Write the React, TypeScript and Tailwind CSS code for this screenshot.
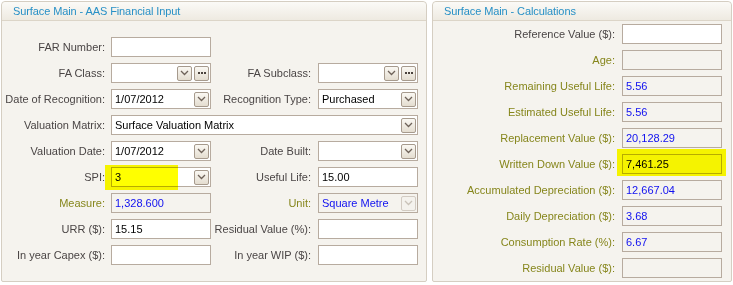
import React from "react";

const FONT = { fontFamily: '"Liberation Sans", Arial, sans-serif' };

function Chevron({ disabled }: { disabled?: boolean }) {
  return (
    <svg width="9" height="6" viewBox="0 0 9 6">
      <path d="M1 1 L4.5 4.5 L8 1" fill="none" stroke={disabled ? "#c9c2b8" : "#6e6259"} strokeWidth="1.3" />
    </svg>
  );
}

function DropBtn({ disabled }: { disabled?: boolean }) {
  return (
    <div
      className={
        "w-[15px] h-[15px] rounded-[2px] border flex items-center justify-center shrink-0 " +
        (disabled
          ? "border-[#d2cbc2] bg-[#f4f2ed]"
          : "border-[#a69a8d] bg-gradient-to-b from-[#faf8f3] to-[#e4ddd0]")
      }
    >
      <Chevron disabled={disabled} />
    </div>
  );
}

function EllipsisBtn() {
  return (
    <div className="w-[15px] h-[15px] rounded-[2px] border border-[#a69a8d] bg-gradient-to-b from-[#faf8f3] to-[#e4ddd0] flex items-center justify-center gap-[1px] shrink-0">
      <div className="w-[2px] h-[2px] bg-[#4a423c]" />
      <div className="w-[2px] h-[2px] bg-[#4a423c]" />
      <div className="w-[2px] h-[2px] bg-[#4a423c]" />
    </div>
  );
}

type InputProps = {
  value?: string;
  w?: string;
  disabled?: boolean;
  blue?: boolean;
  drop?: boolean;
  ellipsis?: boolean;
  dropDisabled?: boolean;
};

function Input({ value = "", w = "w-[100px]", disabled, blue, drop, ellipsis, dropDisabled }: InputProps) {
  return (
    <div
      className={
        w +
        " h-[20px] border border-[#b7ab9f] flex items-center pl-[3px] pr-[1px] shrink-0 " +
        (disabled ? "bg-[#f5f3ee]" : "bg-white")
      }
    >
      <span className={"flex-1 text-[11px] leading-none truncate " + (blue ? "text-[#1010f0]" : "text-black")}>
        {value}
      </span>
      {drop && (
        <div className="flex gap-[2px]">
          <DropBtn disabled={dropDisabled} />
          {ellipsis && <EllipsisBtn />}
        </div>
      )}
    </div>
  );
}

function Label({ text, w, olive }: { text: string; w: string; olive?: boolean }) {
  return (
    <div className={w + " shrink-0 text-right text-[11px] leading-none whitespace-nowrap " + (olive ? "text-[#86861c]" : "text-[#4a4545]")}>
      {text}
    </div>
  );
}

function Panel({ title, className, children }: { title: string; className: string; children: React.ReactNode }) {
  return (
    <div className={className + " border border-[#d5cec2] rounded-t-[4px] rounded-b-[2px] bg-[#f5f3ee] flex flex-col"}>
      <div className="h-[19px] border-b border-[#dcd5c8] bg-gradient-to-b from-[#fbfaf7] to-[#eeeae1] rounded-t-[4px] flex items-center pl-[11px]">
        <span className="text-[11px] tracking-[-0.1px] leading-none text-[#2790c6]">{title}</span>
      </div>
      {children}
    </div>
  );
}

function Yellow({ cls }: { cls: string }) {
  return <div className={"absolute bg-[#ffff00] mix-blend-multiply pointer-events-none " + cls} />;
}

export default function App() {
  const L1 = "w-[103px]";
  const L2 = "w-[100px]";
  return (
    <div style={FONT} className="w-[733px] h-[285px] bg-white pl-[1px] pt-[1px] flex gap-[5px]">
      <Panel title="Surface Main - AAS Financial Input" className="w-[426px] h-[281px]">
        <div className="pt-[16px] flex flex-col gap-[6px]">
          <div className="flex items-center">
            <Label text="FAR Number:" w={L1} />
            <div className="w-[6px]" />
            <Input />
          </div>
          <div className="flex items-center">
            <Label text="FA Class:" w={L1} />
            <div className="w-[6px]" />
            <Input drop ellipsis />
            <Label text="FA Subclass:" w={L2} />
            <div className="w-[7px]" />
            <Input drop ellipsis />
          </div>
          <div className="flex items-center">
            <Label text="Date of Recognition:" w={L1} />
            <div className="w-[6px]" />
            <Input value="1/07/2012" drop />
            <Label text="Recognition Type:" w={L2} />
            <div className="w-[7px]" />
            <Input value="Purchased" drop />
          </div>
          <div className="flex items-center">
            <Label text="Valuation Matrix:" w={L1} />
            <div className="w-[6px]" />
            <Input value="Surface Valuation Matrix" w="w-[307px]" drop />
          </div>
          <div className="flex items-center">
            <Label text="Valuation Date:" w={L1} />
            <div className="w-[6px]" />
            <Input value="1/07/2012" drop />
            <Label text="Date Built:" w={L2} />
            <div className="w-[7px]" />
            <Input drop />
          </div>
          <div className="flex items-center">
            <Label text="SPI:" w={L1} />
            <div className="w-[6px]" />
            <div className="relative">
              <Input value="3" drop />
              <Yellow cls="left-[-6px] top-[-2px] w-[73px] h-[25px]" />
            </div>
            <Label text="Useful Life:" w={L2} />
            <div className="w-[7px]" />
            <Input value="15.00" />
          </div>
          <div className="flex items-center">
            <Label text="Measure:" w={L1} olive />
            <div className="w-[6px]" />
            <Input value="1,328.600" disabled blue />
            <Label text="Unit:" w={L2} olive />
            <div className="w-[7px]" />
            <Input value="Square Metre" disabled blue drop dropDisabled />
          </div>
          <div className="flex items-center">
            <Label text="URR ($):" w={L1} />
            <div className="w-[6px]" />
            <Input value="15.15" />
            <Label text="Residual Value (%):" w={L2} />
            <div className="w-[7px]" />
            <Input />
          </div>
          <div className="flex items-center">
            <Label text="In year Capex ($):" w={L1} />
            <div className="w-[6px]" />
            <Input />
            <Label text="In year WIP ($):" w={L2} />
            <div className="w-[7px]" />
            <Input />
          </div>
        </div>
      </Panel>
      <Panel title="Surface Main - Calculations" className="w-[300px] h-[281px]">
        <div className="pt-[3px] flex flex-col gap-[6px]">
          {[
            { l: "Reference Value ($):", v: "", olive: false, dis: false },
            { l: "Age:", v: "", olive: true, dis: true },
            { l: "Remaining Useful Life:", v: "5.56", olive: true, dis: true },
            { l: "Estimated Useful Life:", v: "5.56", olive: true, dis: true },
            { l: "Replacement Value ($):", v: "20,128.29", olive: true, dis: true },
            { l: "Written Down Value ($):", v: "7,461.25", olive: true, dis: true, y: true },
            { l: "Accumulated Depreciation ($):", v: "12,667.04", olive: true, dis: true },
            { l: "Daily Depreciation ($):", v: "3.68", olive: true, dis: true },
            { l: "Consumption Rate (%):", v: "6.67", olive: true, dis: true },
            { l: "Residual Value ($):", v: "", olive: true, dis: true },
          ].map((r) => (
            <div key={r.l} className="flex items-center">
              <Label text={r.l} w="w-[182px]" olive={r.olive} />
              <div className="w-[7px]" />
              {r.y ? (
                <div className="relative">
                  <Input value={r.v} disabled />
                  <Yellow cls="left-[-5px] top-[-5px] w-[109px] h-[27px]" />
                </div>
              ) : (
                <Input value={r.v} disabled={r.dis} blue />
              )}
            </div>
          ))}
        </div>
      </Panel>
    </div>
  );
}
